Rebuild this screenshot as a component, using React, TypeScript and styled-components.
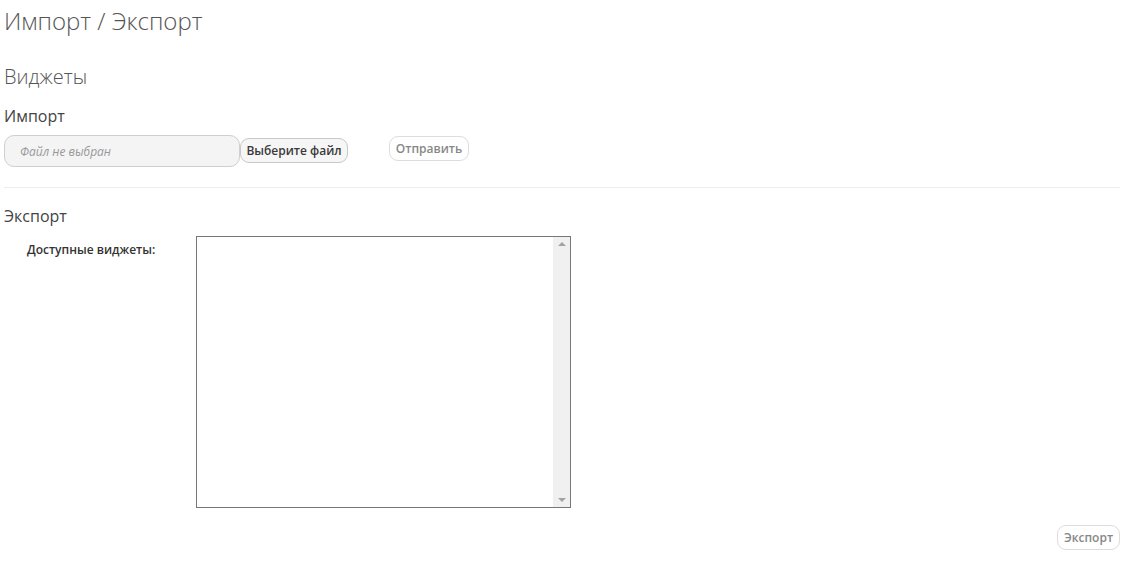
import styled, { createGlobalStyle } from 'styled-components';

const GlobalStyle = createGlobalStyle`
  html, body {
    margin: 0;
    padding: 0;
    background: #fff;
    font-family: "Open Sans", "Liberation Sans", sans-serif;
    color: #333;
  }
`;

const Page = styled.div`
  padding: 0 10px 0 4px;
`;

const PageTitle = styled.h1`
  margin: 0;
  padding-top: 5px;
  font-size: 24px;
  font-weight: 300;
  line-height: 32px;
  color: #555;
`;

const SectionTitle = styled.h2`
  margin: 26px 0 0;
  font-size: 20px;
  font-weight: 300;
  line-height: 28px;
  color: #555;
`;

const SubTitle = styled.h3<{ $top: number }>`
  margin: ${(p) => p.$top}px 0 0;
  font-size: 16px;
  font-weight: 400;
  line-height: 22px;
  color: #444;
`;

const ImportRow = styled.div`
  display: flex;
  align-items: flex-start;
  margin-top: 8px;
`;

const FileField = styled.div`
  width: 236px;
  height: 32px;
  box-sizing: border-box;
  border: 1px solid #cfcfcf;
  border-radius: 10px;
  background: #f4f4f4;
  display: flex;
  align-items: center;
  padding-left: 15px;
  font-size: 12px;
  font-style: italic;
  color: #999;
`;

const PillButton = styled.button<{ $disabled?: boolean }>`
  height: 25px;
  box-sizing: border-box;
  border: 1px solid ${(p) => (p.$disabled ? '#ddd' : '#c8c8c8')};
  border-radius: 9px;
  background: ${(p) => (p.$disabled ? '#fff' : '#f6f6f6')};
  padding: 0;
  white-space: nowrap;
  font-family: "Open Sans", "Liberation Sans", sans-serif;
  font-size: 12px;
  font-weight: 600;
  color: ${(p) => (p.$disabled ? '#888' : '#3a3a3a')};
  cursor: default;
`;

const BrowseButton = styled(PillButton)`
  margin-top: 3px;
  width: 108px;
`;

const SendButton = styled(PillButton)`
  margin-left: 41px;
  margin-top: 1px;
  width: 80px;
`;

const Divider = styled.hr`
  margin: 20px 0 0;
  border: 0;
  border-top: 1px solid #eee;
`;

const ExportGrid = styled.div`
  display: grid;
  grid-template-columns: 192px 375px;
  margin-top: 9px;
`;

const FieldLabel = styled.label`
  padding: 5px 0 0 23px;
  font-size: 12px;
  font-weight: 600;
  color: #333;
`;

const ListBox = styled.div`
  height: 272px;
  box-sizing: border-box;
  border: 1px solid #777;
  display: flex;
  justify-content: flex-end;
`;

const ScrollTrack = styled.div`
  width: 17px;
  background: #f0f0f0;
  display: flex;
  flex-direction: column;
  justify-content: space-between;
  align-items: center;
  padding: 5px 0;
`;

const Arrow = styled.div<{ $down?: boolean }>`
  width: 0;
  height: 0;
  border-left: 4px solid transparent;
  border-right: 4px solid transparent;
  ${(p) => (p.$down ? 'border-top: 4px solid #a3a3a3;' : 'border-bottom: 4px solid #a3a3a3;')}
`;

const Footer = styled.div`
  display: flex;
  justify-content: flex-end;
  margin-top: 17px;
`;

const ExportButton = styled(PillButton)`
  width: 63px;
`;

export default function App() {
  return (
    <>
      <GlobalStyle />
      <Page>
        <PageTitle>Импорт / Экспорт</PageTitle>
        <SectionTitle>Виджеты</SectionTitle>
        <SubTitle $top={14}>Импорт</SubTitle>
        <ImportRow>
          <FileField>Файл не выбран</FileField>
          <BrowseButton>Выберите файл</BrowseButton>
          <SendButton $disabled>Отправить</SendButton>
        </ImportRow>
        <Divider />
        <SubTitle $top={17}>Экспорт</SubTitle>
        <ExportGrid>
          <FieldLabel>Доступные виджеты:</FieldLabel>
          <ListBox>
            <ScrollTrack>
              <Arrow />
              <Arrow $down />
            </ScrollTrack>
          </ListBox>
        </ExportGrid>
        <Footer>
          <ExportButton $disabled>Экспорт</ExportButton>
        </Footer>
      </Page>
    </>
  );
}
